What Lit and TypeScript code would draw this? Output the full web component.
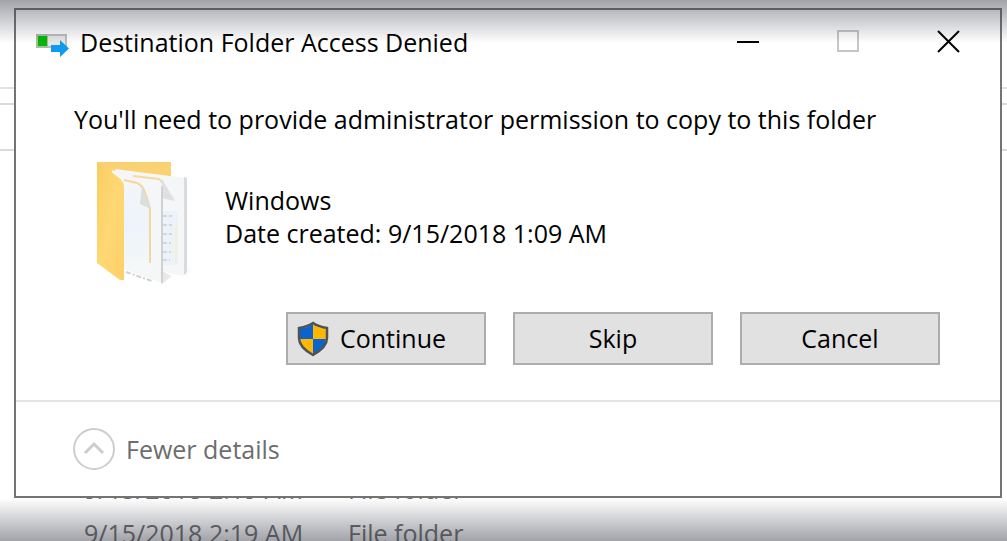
import { LitElement, html, css } from "lit";
import { customElement, property, state } from "lit/decorators.js";

interface FileRow {
  modified: string;
  kind: string;
}

@customElement("explorer-backdrop")
export class ExplorerBackdrop extends LitElement {
  @property({ attribute: false }) rows: FileRow[] = [];

  static styles = css`
    :host {
      display: flex;
      flex-direction: column;
      justify-content: space-between;
      overflow: hidden;
      background: #fff;
      color: #6d6d6d;
      font-size: 25px;
      line-height: 40px;
    }
    .bars {
      padding-top: 87px;
    }
    .tabs {
      height: 14px;
      border-top: 2px solid #e2e2e2;
    }
    .address {
      height: 44px;
      border: solid #dadada;
      border-width: 2px 0;
    }
    .files {
      border-collapse: collapse;
      margin: 0 0 -14px 84px;
    }
    .files td {
      padding: 0;
      height: 44px;
      white-space: nowrap;
    }
    .modified {
      width: 264px;
    }
  `;

  render() {
    return html`
      <div class="bars">
        <div class="tabs"></div>
        <div class="address"></div>
      </div>
      <table class="files">
        <tbody>
          ${this.rows.map(
            (row) => html`<tr>
              <td class="modified">${row.modified}</td>
              <td>${row.kind}</td>
            </tr>`
          )}
        </tbody>
      </table>
    `;
  }
}

const copyIcon = html`<svg class="copy-icon" viewBox="0 0 34 30" aria-hidden="true">
  <rect x="1" y="8" width="29" height="12" fill="#e6e6e6" stroke="#bdbdbd" stroke-width="2" />
  <rect x="0" y="7" width="12" height="14" fill="#a4bda4" />
  <rect x="2" y="9" width="9" height="10" fill="#06b606" />
  <path d="M15 18h9v-5l9 8.500-9 8.500v-5h-9z" fill="#0d9bee" />
</svg>`;

const folderIcon = html`<svg class="folder-icon" viewBox="0 0 112 136" aria-hidden="true">
  <defs>
    <linearGradient id="cover" x1="0" y1="0" x2="1" y2="1">
      <stop offset="0" stop-color="#f8cd62" />
      <stop offset="0.500" stop-color="#ffd874" />
      <stop offset="1" stop-color="#fbd066" />
    </linearGradient>
    <linearGradient id="paper" x1="0" y1="0" x2="0" y2="1">
      <stop offset="0" stop-color="#f4f6f8" />
      <stop offset="0.450" stop-color="#ecf3fa" />
      <stop offset="1" stop-color="#f7f8f7" />
    </linearGradient>
    <linearGradient id="shade" x1="0" y1="0" x2="1" y2="0">
      <stop offset="0" stop-color="#000" stop-opacity="0.100" />
      <stop offset="1" stop-color="#000" stop-opacity="0" />
    </linearGradient>
  </defs>
  <path d="M98 106l8 5-8 7zM74 112l10 5-10 8z" fill="url(#shade)" />
  <path d="M9 3h74v24H20z" fill="#fad273" />
  <path d="M27 10l63 8 8 1v96l-4 2-34-8z" fill="#f5f6f7" />
  <path d="M97 18l2 1v94l-3 3V18z" fill="#dadbdc" />
  <path d="M74 52h16v54H74z" fill="#ecf2f8" />
  <path d="M75 57h9M75 66h9M75 75h9M75 84h8M75 93h8M75 101h7" stroke="#ced8df" stroke-width="2" stroke-dasharray="4 2" />
  <path d="M45 17l26 3q4 3 7 11l7 9" fill="none" stroke="#f7d9a0" stroke-width="2" />
  <path d="M74 20l13 22-14-3z" fill="#dfe0e1" />
  <path d="M88 68v34" stroke="#f2f3cc" stroke-width="2" />
  <path d="M24 11l50 17v96l-38-14z" fill="#f5f6f7" />
  <path d="M36 24l18 4 8 12v75l-26-5z" fill="url(#paper)" />
  <path d="M73 27l2 1v95l-2 2z" fill="#d0d1d3" />
  <path d="M36 21l13 3q6 2 9 12l4 14v54" fill="none" stroke="#f6d69c" stroke-width="2" />
  <path d="M54 27l9 23-11-5z" fill="#dcdddd" />
  <path d="M38 113l26 9" stroke="#cfd1ce" stroke-width="2" stroke-dasharray="5 2 2 2" />
  <path d="M9 3l21 15q6 4 6 11v92l-4 0-23-17z" fill="url(#cover)" />
</svg>`;

const shieldIcon = html`<svg class="shield-icon" viewBox="0 0 32 36" aria-hidden="true">
  <defs>
    <clipPath id="shield-face">
      <path d="M16 3c4 3 8 4 13 4v10c0 7-5 12-13 17C8 29 3 24 3 17V7c5 0 9-1 13-4z" />
    </clipPath>
  </defs>
  <g clip-path="url(#shield-face)">
    <rect width="16" height="18" fill="#0b63ce" />
    <rect x="16" width="16" height="18" fill="#ffb703" />
    <rect y="18" width="16" height="18" fill="#ffb703" />
    <rect x="16" y="18" width="16" height="18" fill="#0b63ce" />
  </g>
  <path d="M16 2c4 3 8 4 14 5v10c0 7-5 12-14 17C7 29 2 24 2 17V7c6-1 10-2 14-5z" fill="none" stroke="#505356" stroke-width="2.500" />
</svg>`;

@customElement("app-root")
export class AppRoot extends LitElement {
  @state() private expanded = true;

  private readonly rows: FileRow[] = [
    { modified: "9/15/2018 2:19 AM", kind: "File folder" },
    { modified: "9/15/2018 2:19 AM", kind: "File folder" },
  ];

  static styles = css`
    :host {
      display: grid;
      grid-template: minmax(100vh, auto) / 1fr;
      position: relative;
      font-family: "Open Sans", "Noto Sans", sans-serif;
      font-size: 25px;
      line-height: 33px;
      color: #000;
    }
    explorer-backdrop,
    .dialog {
      grid-area: 1 / 1;
      min-width: 0;
    }
    .dialog {
      position: relative;
      align-self: start;
      margin: 8px 5px 43px 14px;
      border: 2px solid #747474;
      background: #fff;
    }
    .fade {
      position: absolute;
      left: 0;
      right: 0;
      height: 43px;
      pointer-events: none;
    }
    .fade.top {
      top: 0;
      background: linear-gradient(rgba(48, 52, 64, 0.45), rgba(48, 52, 64, 0));
    }
    .fade.bottom {
      bottom: 0;
      background: linear-gradient(rgba(48, 52, 64, 0), rgba(48, 52, 64, 0.45));
    }
    header {
      display: flex;
      align-items: center;
      height: 64px;
      padding: 0 2px 0 20px;
    }
    h1 {
      flex: 1;
      margin: 0 0 0 10px;
      font: inherit;
      white-space: nowrap;
    }
    .copy-icon {
      width: 34px;
      height: 30px;
    }
    .caption {
      display: grid;
      place-items: center;
      width: 100px;
      height: 64px;
      padding: 0;
      border: 0;
      background: none;
      color: #000;
    }
    .caption:disabled {
      color: #c6c6c6;
    }
    .caption svg {
      width: 24px;
      height: 24px;
      fill: none;
      stroke: currentColor;
      stroke-width: 2;
    }
    main {
      padding: 29px 60px 35px 58px;
    }
    p {
      margin: 0;
    }
    .item {
      display: flex;
      margin-top: 23px;
    }
    .folder-icon {
      width: 112px;
      height: 136px;
      margin-left: 14px;
    }
    .facts {
      margin-left: 25px;
      padding-top: 25px;
    }
    .actions {
      display: flex;
      justify-content: flex-end;
      gap: 27px;
      margin-top: 17px;
    }
    .action {
      display: flex;
      align-items: center;
      justify-content: center;
      gap: 11px;
      width: 200px;
      height: 53px;
      padding: 0 9px;
      border: 2px solid #adadad;
      background: #e1e1e1;
      color: #000;
      font: inherit;
    }
    .elevated {
      justify-content: flex-start;
    }
    .shield-icon {
      width: 32px;
      height: 36px;
    }
    footer {
      display: flex;
      align-items: center;
      height: 94px;
      padding-left: 57px;
      border-top: 2px solid #e3e3e3;
    }
    .details {
      display: flex;
      align-items: center;
      gap: 11px;
      padding: 0;
      border: 0;
      background: none;
      color: #6d6d6d;
      font: inherit;
    }
    .details svg {
      width: 42px;
      height: 42px;
      fill: none;
      stroke: #cdcdcd;
    }
    .collapsed svg {
      transform: rotate(180deg);
    }
  `;

  private toggle() {
    this.expanded = !this.expanded;
  }

  render() {
    return html`
      <explorer-backdrop .rows=${this.rows}></explorer-backdrop>
      <section class="dialog" role="dialog" aria-labelledby="title">
        <header>
          ${copyIcon}
          <h1 id="title">Destination Folder Access Denied</h1>
          <button class="caption" aria-label="Minimize">
            <svg viewBox="0 0 24 24"><path d="M1 12h22" /></svg>
          </button>
          <button class="caption" aria-label="Maximize" disabled>
            <svg viewBox="0 0 24 24"><path d="M2 1h20v20H2z" /></svg>
          </button>
          <button class="caption" aria-label="Close">
            <svg viewBox="0 0 24 24"><path d="M2 1l21 21M23 1L2 22" /></svg>
          </button>
        </header>
        <main>
          <p>You'll need to provide administrator permission to copy to this folder</p>
          ${this.expanded
            ? html`<div class="item">
                ${folderIcon}
                <div class="facts">
                  <p>Windows</p>
                  <p>Date created: 9/15/2018 1:09 AM</p>
                </div>
              </div>`
            : ""}
          <div class="actions">
            <button class="action elevated">${shieldIcon}<span>Continue</span></button>
            <button class="action">Skip</button>
            <button class="action">Cancel</button>
          </div>
        </main>
        <footer>
          <button
            class="details ${this.expanded ? "" : "collapsed"}"
            aria-expanded=${this.expanded}
            @click=${this.toggle}
          >
            <svg viewBox="0 0 42 42" aria-hidden="true">
              <circle cx="21" cy="21" r="20" stroke-width="2" />
              <path d="M12 25l9-9 9 9" stroke-width="3" />
            </svg>
            <span>${this.expanded ? "Fewer details" : "More details"}</span>
          </button>
        </footer>
      </section>
      <div class="fade top"></div>
      <div class="fade bottom"></div>
    `;
  }
}
